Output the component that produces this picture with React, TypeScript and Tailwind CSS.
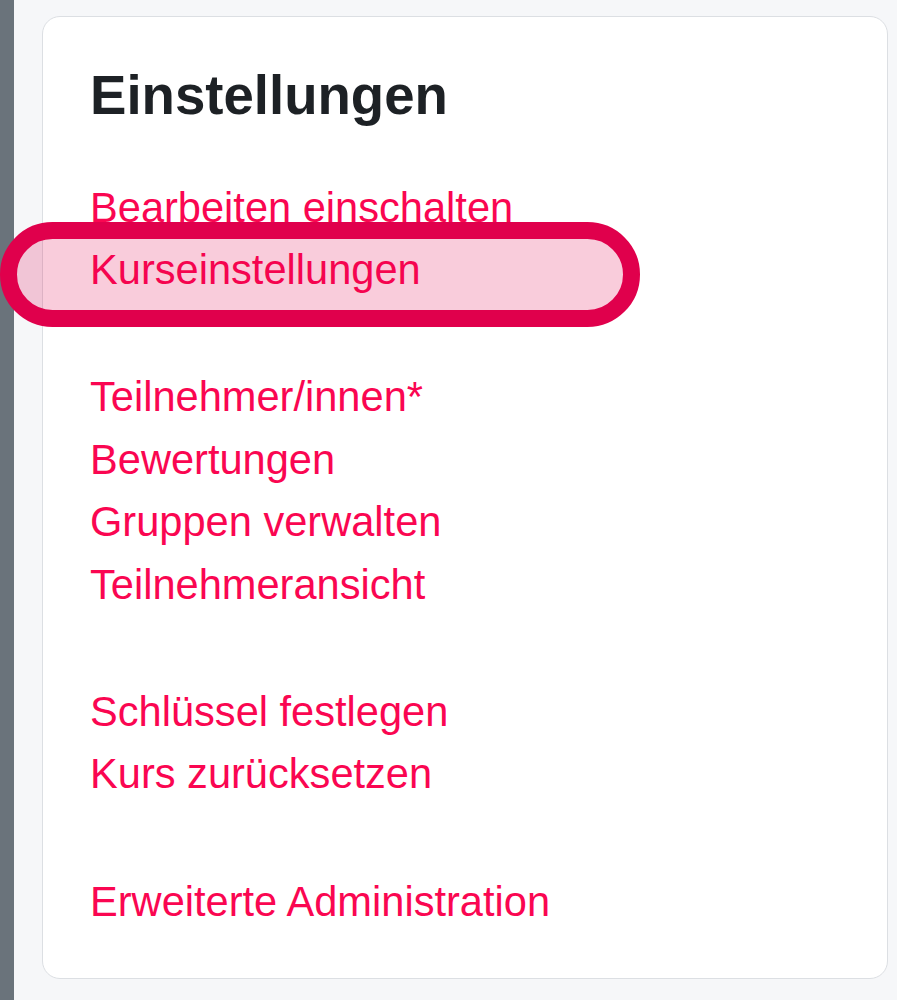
import React from 'react'

const groups: string[][] = [
  ['Bearbeiten einschalten', 'Kurseinstellungen'],
  ['Teilnehmer/innen*', 'Bewertungen', 'Gruppen verwalten', 'Teilnehmeransicht'],
  ['Schlüssel festlegen', 'Kurs zurücksetzen'],
  ['Erweiterte Administration'],
]

export default function App() {
  return (
    <div
      className="relative flex min-h-[1000px] w-full bg-[#f6f7f9]"
      style={{ fontFamily: '"Liberation Sans", Arial, sans-serif' }}
    >
      {/* left drawer edge */}
      <div className="w-[14px] shrink-0 bg-[#6a737b]" />

      <main className="flex-1 pl-[28px] pr-[9px] pt-[16px]">
        <section className="rounded-[18px] border border-[#dcdfe3] bg-white px-[47px] pt-[46px] pb-[45px]">
          <h2 className="mb-[48px] text-[54.6px] font-bold leading-[1.2] text-[#1d2125]">
            Einstellungen
          </h2>

          <nav className="flex flex-col gap-[65px]">
            {groups.map((group, i) => (
              <ul key={i} className="flex flex-col">
                {group.map((item) => (
                  <li key={item}>
                    <a href="#" className="block text-[41.6px] leading-[62.4px] text-[#fa0651]">
                      {item}
                    </a>
                  </li>
                ))}
              </ul>
            ))}
          </nav>
        </section>
      </main>

      {/* highlight annotation */}
      <div className="pointer-events-none absolute left-0 top-[222px] h-[105px] w-[640px] rounded-full border-[17px] border-[#e0004c] bg-[#e0004c]/20" />
    </div>
  )
}
